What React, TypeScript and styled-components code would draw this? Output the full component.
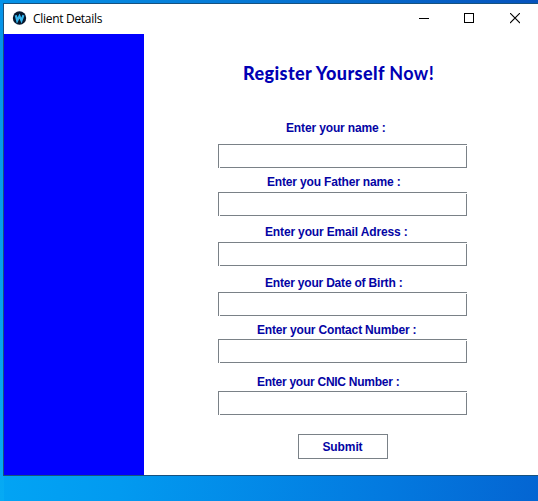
import React from "react";
import styled, { createGlobalStyle } from "styled-components";

const GlobalStyle = createGlobalStyle`
  * { box-sizing: border-box; }
  html, body, #root { margin: 0; height: 100%; overflow: hidden; }
`;

const Desktop = styled.div`
  width: 538px;
  height: 501px;
  padding: 3px 0 0 3px;
  overflow: hidden;
  background:
    linear-gradient(90deg, #0593e8, #0579d6 45%, #0653bd) top / 100% 4px no-repeat,
    linear-gradient(180deg, #0593e8, #06aaf4) left / 4px 100% no-repeat,
    linear-gradient(97deg, #02a9f6 0%, #029af0 30%, #0379df 75%, #0465d2 100%);
`;

const Window = styled.main`
  width: 535px;
  height: 473px;
  display: flex;
  flex-direction: column;
  border: 1px solid #17527f;
  border-right: 0;
  background: #fff;
`;

const TitleBar = styled.header`
  height: 30px;
  flex: none;
  display: flex;
  align-items: center;
  padding-left: 8px;
`;

const WindowTitle = styled.span`
  flex: 1;
  margin-left: 5px;
  font: 12px/16px "Open Sans", sans-serif;
  letter-spacing: -0.3px;
  color: #000;
`;

const Control = styled.button`
  width: 46px;
  height: 30px;
  padding: 0;
  display: grid;
  place-items: center;
  border: 0;
  background: none;
`;

const Body = styled.div`
  flex: 1;
  display: flex;
`;

const SidePanel = styled.aside`
  width: 140px;
  background: #0000ff;
`;

const Form = styled.form`
  flex: 1;
  padding: 27px 0 0 74px;
`;

const Heading = styled.h1`
  height: 24px;
  margin: 0 0 33px 25px;
  font: 900 18px/24px Lato, sans-serif;
  letter-spacing: 0.4px;
  white-space: nowrap;
  color: #0000b4;
`;

const LightWord = styled.span`
  font-weight: 700;
`;

const Field = styled.label<{ $height: number; $gap: number; $indent: number; $spacing: number }>`
  height: ${(p) => p.$height}px;
  display: flex;
  flex-direction: column;
  justify-content: space-between;
  font: 700 12px/14px "Liberation Sans", Arial, sans-serif;
  color: #0404a4;

  span {
    margin-top: ${(p) => p.$gap}px;
    padding-left: ${(p) => p.$indent}px;
    letter-spacing: ${(p) => p.$spacing}px;
    white-space: nowrap;
  }
`;

const Input = styled.input`
  width: 249px;
  height: 24px;
  padding: 3px 5px;
  border: 0;
  border-radius: 0;
  outline: 0;
  background:
    linear-gradient(#7a8187, #7a8187) 0 0 / 100% 1px no-repeat,
    linear-gradient(#7a8187, #7a8187) 0 0 / 1px 100% no-repeat,
    linear-gradient(#7a8187, #7a8187) 100% 100% / 1px calc(100% - 2px) no-repeat,
    linear-gradient(#7a8187, #7a8187) 100% 100% / calc(100% - 2px) 1px no-repeat,
    #fff;
`;

const Submit = styled.button`
  display: block;
  width: 90px;
  height: 25px;
  margin: 19px 0 0 80px;
  padding: 1px 1px 0 0;
  border: 1px solid #7a8187;
  background: #fff;
  font: 700 12px/23px "Liberation Sans", Arial, sans-serif;
  letter-spacing: -0.1px;
  color: #0404a4;
`;

const fields = [
  { label: "Enter your name :", height: 50, gap: 3, indent: 68, spacing: -0.14 },
  { label: "Enter you Father name :", height: 48, gap: 7, indent: 49, spacing: -0.17 },
  { label: "Enter your Email Adress :", height: 50, gap: 9, indent: 47, spacing: -0.15 },
  { label: "Enter your Date of Birth :", height: 50, gap: 10, indent: 47, spacing: -0.2 },
  { label: "Enter your Contact Number :", height: 47, gap: 7, indent: 39, spacing: -0.17 },
  { label: "Enter your CNIC Number :", height: 52, gap: 12, indent: 39, spacing: -0.26 },
];

function AppLogo() {
  return (
    <svg width="16" height="16" viewBox="0 0 16 16">
      <circle cx="7.5" cy="7" r="6.7" fill="#06182e" />
      <path d="M3.8 4.2 5.2 9.6 7.5 5l2 4.6 1.9-5.4" fill="none" stroke="#35b5ee" strokeWidth="2.2" />
    </svg>
  );
}

export default function App() {
  return (
    <>
      <GlobalStyle />
      <Desktop>
        <Window>
          <TitleBar>
            <AppLogo />
            <WindowTitle>Client Details</WindowTitle>
            <Control type="button" aria-label="Minimize">
              <svg width="12" height="12" shapeRendering="crispEdges"><path d="M2 5.5h10" stroke="#000" /></svg>
            </Control>
            <Control type="button" aria-label="Maximize">
              <svg width="10" height="12" shapeRendering="crispEdges"><path d="M.5.5h9v9h-9z" fill="none" stroke="#000" /></svg>
            </Control>
            <Control type="button" aria-label="Close">
              <svg width="10" height="12"><path d="m0 0 10 10M10 0 0 10" stroke="#000" strokeWidth="1.1" /></svg>
            </Control>
          </TitleBar>
          <Body>
            <SidePanel />
            <Form>
              <Heading>
                Register Yourself <LightWord>Now!</LightWord>
              </Heading>
              {fields.map((f) => (
                <Field key={f.label} $height={f.height} $gap={f.gap} $indent={f.indent} $spacing={f.spacing}>
                  <span>{f.label}</span>
                  <Input />
                </Field>
              ))}
              <Submit type="button">Submit</Submit>
            </Form>
          </Body>
        </Window>
      </Desktop>
    </>
  );
}
